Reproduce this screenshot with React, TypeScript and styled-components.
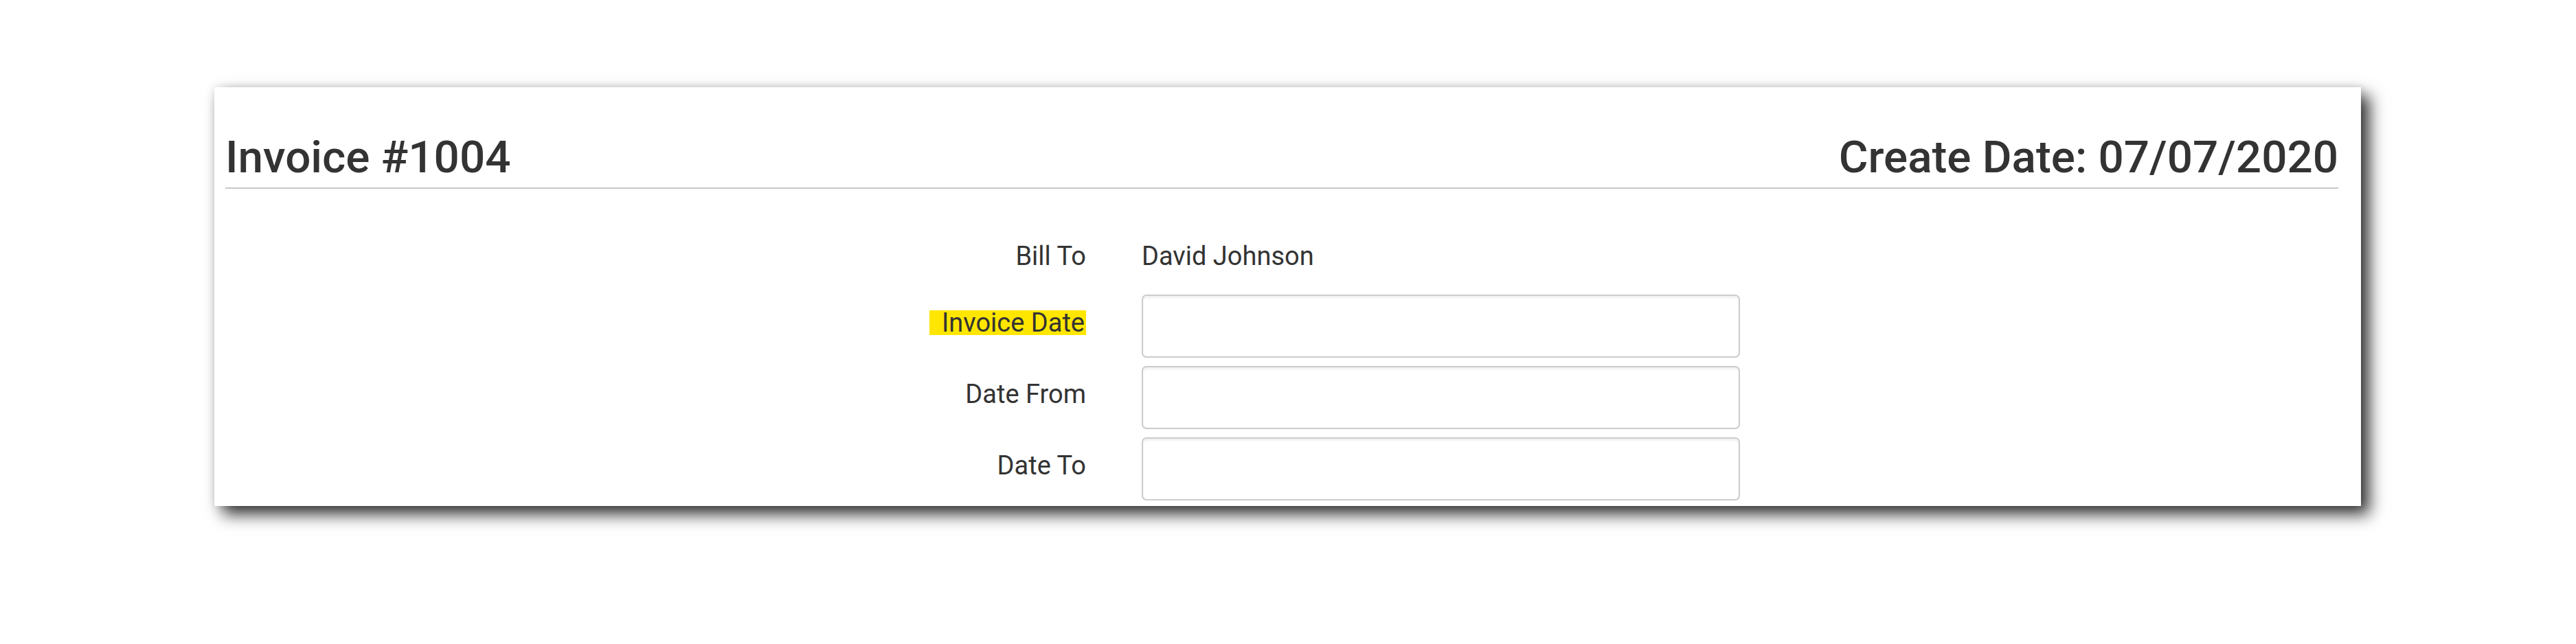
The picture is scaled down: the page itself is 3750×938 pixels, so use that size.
import React from 'react';
import styled, { createGlobalStyle } from 'styled-components';

const GlobalStyle = createGlobalStyle`
  html, body {
    margin: 0;
    padding: 0;
    background: #ffffff;
  }

  body {
    font-family: Roboto, 'Liberation Sans', Arial, sans-serif;
    color: #333333;
  }
`;

type Field = {
  label: string;
  highlight?: boolean;
};

const FIELDS: Field[] = [
  { label: 'Invoice Date', highlight: true },
  { label: 'Date From' },
  { label: 'Date To' },
];

export default function App(): JSX.Element {
  return (
    <>
      <GlobalStyle />
      <Page>
        <Card>
          <Header>
            <Title>Invoice #1004</Title>
            <Title>Create Date: 07/07/2020</Title>
          </Header>
          <Form>
            <Label $static>Bill To</Label>
            <StaticValue>David Johnson</StaticValue>
            {FIELDS.map((field) => (
              <React.Fragment key={field.label}>
                <Label>
                  {field.highlight ? (
                    <Highlight>{field.label}</Highlight>
                  ) : (
                    field.label
                  )}
                </Label>
                <Input type='text' aria-label={field.label} />
              </React.Fragment>
            ))}
          </Form>
        </Card>
      </Page>
    </>
  );
}

const Page = styled.div`
  width: 3750px;
  height: 938px;
  box-sizing: border-box;
  padding: 127px 0 0 312px;
  overflow: hidden;
`;

const Card = styled.section`
  width: 3125px;
  box-sizing: border-box;
  padding: 0 33px 8px 16px;
  background: #ffffff;
  box-shadow: 12px 12px 22px rgba(0, 0, 0, 0.8),
    0 0 12px rgba(0, 0, 0, 0.12);
`;

const Header = styled.header`
  display: flex;
  align-items: baseline;
  justify-content: space-between;
  padding-top: 66px;
  padding-bottom: 8px;
  border-bottom: 2px solid #c8c8c8;
`;

const Title = styled.h2`
  margin: 0;
  font-size: 65.6px;
  font-weight: 500;
  line-height: 72px;
  color: #333333;
`;

const Form = styled.div`
  display: grid;
  grid-template-columns: 1253px 871px;
  grid-auto-rows: 92px;
  column-gap: 81px;
  row-gap: 12px;
  padding-top: 50px;
`;

const Label = styled.div<{ $static?: boolean }>`
  box-sizing: border-box;
  padding-top: ${(props) => (props.$static ? '20px' : '13px')};
  font-size: 38px;
  line-height: 56px;
  text-align: right;
  color: #333333;
`;

const StaticValue = styled.div`
  box-sizing: border-box;
  padding-top: 20px;
  font-size: 38px;
  line-height: 56px;
  color: #333333;
`;

const Highlight = styled.span`
  display: inline-block;
  line-height: 36px;
  padding: 0 2px 0 18px;
  background: #ffe600;
`;

const Input = styled.input`
  box-sizing: border-box;
  width: 100%;
  height: 92px;
  margin: 0;
  border: 2px solid #cccccc;
  border-radius: 7px;
  background: #ffffff;
  box-shadow: inset 0 3px 3px rgba(0, 0, 0, 0.06);
  font-family: inherit;
  font-size: 38px;
  outline: none;
`;
